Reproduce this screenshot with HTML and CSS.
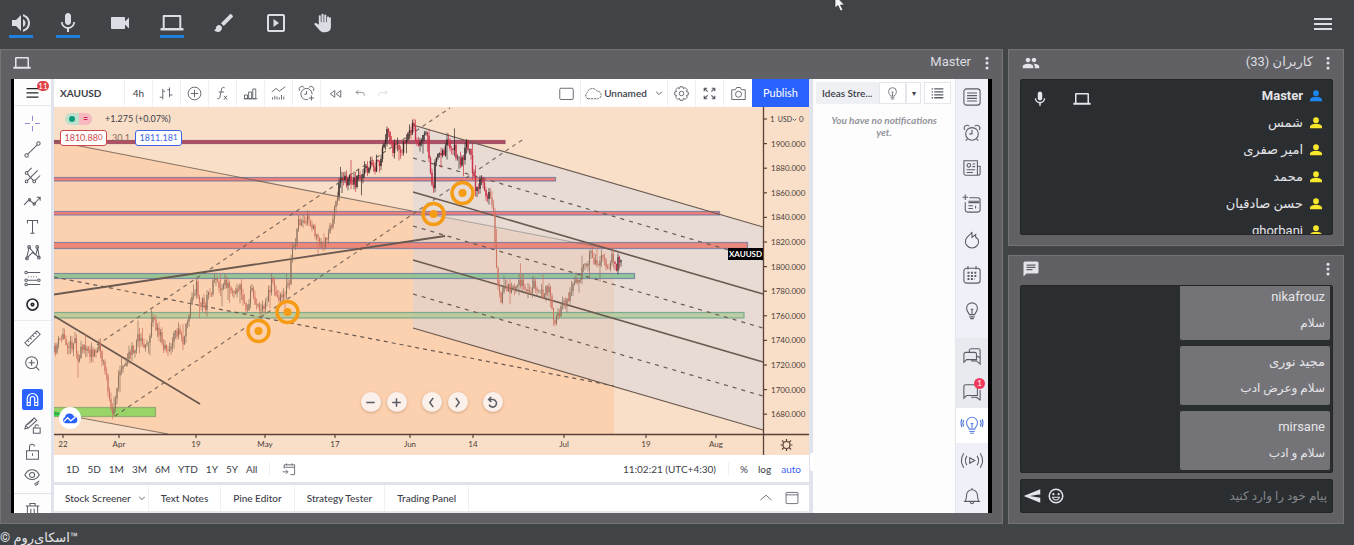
FILE: index.html
```html
<!DOCTYPE html>
<html lang="fa">
<head>
<meta charset="utf-8">
<title>Skyroom</title>
<link rel="stylesheet" href="styles.css">
</head>
<body>
<svg class="defs" aria-hidden="true">
  <symbol id="laptop" viewBox="0 0 24 24"><path d="M4 4h16c.8 0 1.300.5 1.300 1.200V17H23.500v2.500H.5V17h2.200V5.200C2.700 4.500 3.200 4 4 4zm.7 2v11h14.600V6z" fill-rule="evenodd"/></symbol>
  <symbol id="mic" viewBox="0 0 24 24"><path d="M12 14c1.660 0 3-1.340 3-3V5c0-1.660-1.340-3-3-3S9 3.340 9 5v6c0 1.660 1.340 3 3 3zm5.300-3c0 3-2.540 5.100-5.300 5.100S6.700 14 6.700 11H5c0 3.410 2.720 6.230 6 6.720V21h2v-3.280c3.280-.48 6-3.300 6-6.720z"/></symbol>
  <symbol id="dots" viewBox="0 0 24 24"><circle cx="12" cy="5.500" r="2"/><circle cx="12" cy="12" r="2"/><circle cx="12" cy="18.500" r="2"/></symbol>
  <symbol id="person" viewBox="0 0 16 16"><circle cx="8" cy="4.200" r="3.800"/><path d="M0 15v-2c0-2.600 4.500-4 8-4s8 1.400 8 4v2z"/></symbol>
  <symbol id="bulb" viewBox="0 0 20 20"><path d="M7 14c0-2-3-3-3-7a6 6 0 0 1 12 0c0 4-3 5-3 7zM7 16.500h6M8 18.500h4M10 14V8M8.500 8h3"/></symbol>
  <symbol id="alarm" viewBox="0 0 20 20"><circle cx="10" cy="11" r="7"/><path d="M10 6.500V11H7M2 6.500A3.200 3.200 0 0 1 7 2.500M18 6.500A3.200 3.200 0 0 0 13 2.500M5 16.500l-2 2M15 16.500l2 2"/></symbol>
  <symbol id="chev" viewBox="0 0 10 10"><path d="M1.500 3.500L5 7l3.500-3.500"/></symbol>
</svg>

<header class="topbar">
  <button class="tool on" aria-label="Speaker"><svg viewBox="0 0 24 24"><path d="M3 9v6h4l5 5V4L7 9H3zm13.500 3A4.500 4.500 0 0 0 14 7.970v8.050c1.480-.73 2.500-2.250 2.500-4.020zM14 3.230v2.060c2.890.86 5 3.540 5 6.710s-2.110 5.850-5 6.710v2.060c4.010-.91 7-4.490 7-8.770s-2.990-7.860-7-8.770z"/></svg></button>
  <button class="tool on" aria-label="Microphone"><svg><use href="#mic"/></svg></button>
  <button class="tool" aria-label="Camera"><svg viewBox="0 0 24 24"><path d="M17 10.500V7c0-.550-.45-1-1-1H4c-.55 0-1 .45-1 1v10c0 .550.45 1 1 1h12c.55 0 1-.45 1-1v-3.500l4 4v-11l-4 4z"/></svg></button>
  <button class="tool on" aria-label="Screen sharing"><svg><use href="#laptop"/></svg></button>
  <button class="tool" aria-label="Whiteboard"><svg viewBox="0 0 24 24"><path d="M7 14c-1.660 0-3 1.340-3 3 0 1.310-1.160 2-2 2 .92 1.220 2.490 2 4 2 2.210 0 4-1.790 4-4 0-1.660-1.340-3-3-3zm13.710-9.370l-1.340-1.340a1 1 0 0 0-1.410 0L9 12.250 11.750 15l8.960-8.960a1 1 0 0 0 0-1.410z"/></svg></button>
  <button class="tool" aria-label="Media"><svg viewBox="0 0 24 24"><path d="M9.500 8v8l5.500-4zM19 3H5a2 2 0 0 0-2 2v14a2 2 0 0 0 2 2h14a2 2 0 0 0 2-2V5a2 2 0 0 0-2-2zm0 16H5V5h14z"/></svg></button>
  <button class="tool hand" aria-label="Raise hand"><svg viewBox="0 0 24 24"><path d="M21.500 5.500v11c0 4-2.500 6.500-6.500 6.500h-2c-2 0-3.500-.7-4.800-2.100L1.300 13.100c.8-1 2-1.300 3.200-.6L7 14V4c0-1.700 2.300-1.700 2.300 0v7h.9V2.300c0-1.700 2.400-1.700 2.400 0V11h.9V3c0-1.700 2.400-1.700 2.400 0v8h.9V5.500c0-1.700 2.400-1.700 2.400 0z"/></svg></button>
  <span class="grow"></span>
  <button class="tool" aria-label="Menu"><svg viewBox="0 0 24 24"><path d="M3 7h18v2H3zm0 5h18v2H3zm0 5h18v2H3z"/></svg></button>
</header>

<main class="room">
  <section class="panel share">
    <header class="panel-head">
      <svg class="ic18"><use href="#laptop"/></svg>
      <span class="grow"></span>
      <h2>Master</h2>
      <button class="dots" aria-label="Options"><svg><use href="#dots"/></svg></button>
    </header>
    <div class="screen">
      <nav class="draw-tools">
        <button class="menu" aria-label="Main menu"><svg viewBox="0 0 20 20" class="thick"><path d="M3 5.500h14M3 10.500h14M3 15.500h14"/></svg><b class="badge">11</b></button>
        <div class="group first">
          <button aria-label="Cross"><svg viewBox="0 0 20 20" class="violet"><path d="M10 1v6M10 13v6M1 10h6M13 10h6"/></svg></button>
          <button aria-label="Trend line"><svg viewBox="0 0 20 20"><circle cx="3" cy="17" r="2"/><circle cx="17" cy="3" r="2"/><path d="M4.500 15.500L15.500 4.500"/></svg></button>
          <button aria-label="Pitchfork"><svg viewBox="0 0 20 20"><circle cx="3" cy="7" r="1.600"/><circle cx="3" cy="17" r="1.600"/><circle cx="12" cy="17" r="1.600"/><path d="M4 6l5-5M4 16L16 4M13 16l6-6M4 8l7 8"/></svg></button>
          <button aria-label="Pattern"><svg viewBox="0 0 20 20"><path d="M0 14l6-6 6 5 7-8M15 5h4v4"/><circle cx="6.500" cy="8" r="1.400"/><circle cx="12" cy="13" r="1.400"/></svg></button>
          <button aria-label="Text"><svg viewBox="0 0 20 20"><path d="M4 6.500V3h12v3.500M10 3v15M7.500 18h5"/></svg></button>
          <button aria-label="XABCD"><svg viewBox="0 0 20 20"><path d="M3 17l3-13 8 9 2-9 2 12-8-6z"/><circle cx="3.500" cy="17" r="1.600"/><circle cx="6" cy="3.500" r="1.600"/><circle cx="15.500" cy="3.500" r="1.600"/><circle cx="17.500" cy="16" r="1.600"/></svg></button>
          <button aria-label="Position"><svg viewBox="0 0 20 20"><path d="M4 3h15M4 12h12M4 17h15"/><path d="M5 8h12" stroke-dasharray="1 2"/><circle cx="2.500" cy="3" r="1.500"/><circle cx="2.500" cy="12" r="1.500"/><circle cx="2.500" cy="17" r="1.500"/><circle cx="17.500" cy="12" r="1.500"/></svg></button>
          <button aria-label="Icons"><svg viewBox="0 0 20 20" class="heavy"><circle cx="10" cy="10" r="6.500"/><circle cx="10" cy="10" r="1.500"/></svg></button>
        </div>
        <div class="group second">
          <button aria-label="Measure"><svg viewBox="0 0 20 20"><path d="M1 15L15 1 19 5 5 19zM4 12l2 2M7 9l2 2M10 6l2 2M13 3l2 2"/></svg></button>
          <button aria-label="Zoom in"><svg viewBox="0 0 20 20"><circle cx="9" cy="9" r="7"/><path d="M14 14l4 4M5.500 9h7M9 5.500v7"/></svg></button>
        </div>
        <div class="group">
          <button aria-label="Magnet"><svg viewBox="0 0 20 20" class="magnet"><path d="M3 18V9a7 7 0 0 1 14 0v9h-4V9a3 3 0 0 0-6 0v9zM3 14h4M13 14h4"/></svg></button>
          <button aria-label="Keep drawing"><svg viewBox="0 0 20 20"><path d="M1 14l1-4 10-9 3 3L5 13zM2 10l3 3M4 9l7-6M11 13h8v6h-8zM13 13v-2a2 2 0 0 1 4 0"/></svg></button>
          <button aria-label="Lock drawings"><svg viewBox="0 0 20 20"><path d="M3 9h14v10H3zM6.500 9V5a3 3 0 0 1 6-1M10 12v3"/></svg></button>
          <button aria-label="Hide drawings"><svg viewBox="0 0 20 20"><path d="M1 7c4-8 13-8 17 0-4 7-13 7-17 0zM12 18l6-4M13 19c1 0 3 0 4-3"/><circle cx="9.500" cy="7" r="3"/></svg></button>
        </div>
        <button class="trash" aria-label="Remove"><svg viewBox="0 0 20 20"><path d="M2 6h16M7 6V3h6v3M4 6v12h12V6M8 9v7M12 9v7"/></svg></button>
      </nav>

      <div class="chart-col">
        <div class="chart-bar">
          <button class="symbol">XAUUSD</button>
          <button class="cell">4h</button>
          <button class="cell" aria-label="Bars"><svg viewBox="0 0 20 20"><path d="M5 4v14M1 15h4M5 7h3M14 2v13M11 5h3M14 12h4"/></svg></button>
          <button class="cell" aria-label="Compare"><svg viewBox="0 0 20 20"><circle cx="10" cy="10" r="8.500"/><path d="M5 10h10M10 5v10"/></svg></button>
          <button class="cell" aria-label="Indicators"><svg viewBox="0 0 20 20"><path d="M13 2.500c-3-1.500-4 0-4.500 3L6.500 15c-.5 2-1.500 2.500-3.500 1.500M5 8h7M12 13l4 5M16 13l-4 5"/></svg></button>
          <button class="cell" aria-label="Financials"><svg viewBox="0 0 20 20"><path d="M2 17v-5h4v5zM7.500 17V8h4v9zM13 17V4h4v13zM1 17h18"/></svg></button>
          <button class="cell" aria-label="Templates"><svg viewBox="0 0 20 20"><path d="M1 8l6-5 4 4 8-6M2 18v-3M5 18v-5M8 18v-4M11 18v-3M14 18v-6M17 18v-4"/></svg></button>
          <button class="cell" aria-label="Alert"><svg viewBox="0 0 20 20"><path d="M12 18A7.500 7.500 0 1 1 17.500 11M10 6.500V11H7M1 6.500A3.500 3.500 0 0 1 7 2M19 6.500A3.500 3.500 0 0 0 13 2M13 16h7M16.500 12.500v7"/></svg></button>
          <button class="cell plain" aria-label="Replay"><svg viewBox="0 0 20 20"><path d="M9 6v9l-6-4.500zM17 6v9l-6-4.500z"/></svg></button>
          <button class="cell undo" aria-label="Undo"><svg viewBox="0 0 20 20"><path d="M6 4L2 8l4 4M2 8h10c4 0 5 2 5 6"/></svg></button>
          <button class="cell undo faint" aria-label="Redo"><svg viewBox="0 0 20 20"><path d="M14 4l4 4-4 4M18 8H8c-4 0-5 2-5 6"/></svg></button>
          <span class="grow"></span>
          <button class="cell" aria-label="Layout"><svg viewBox="0 0 20 20"><rect x="1" y="3" width="18" height="15" rx="1.500"/></svg></button>
          <button class="cell cloud"><svg viewBox="0 0 20 20"><path d="M4 17a4.500 4.500 0 0 1-1-8 7 7 0 0 1 13-2 5 5 0 0 1 1 10z" stroke-dasharray="3 1"/></svg>Unnamed<svg class="chev"><use href="#chev"/></svg></button>
          <button class="cell" aria-label="Settings"><svg viewBox="0 0 20 20"><path d="M8 1h4l.7 2.500 2.300-1.300 2.800 2.800-1.300 2.300L19 8v4l-2.500.7 1.300 2.300-2.800 2.800-2.300-1.300L12 19H8l-.7-2.500L5 17.800 2.200 15l1.300-2.300L1 12V8l2.500-.7L2.200 5 5 2.200l2.300 1.300z"/><circle cx="10" cy="10" r="3"/></svg></button>
          <button class="cell" aria-label="Full screen"><svg viewBox="0 0 20 20"><path d="M3 7V3h4M3 3l4.500 4.500M13 3h4v4M17 3l-4.500 4.500M3 13v4h4M3 17l4.500-4.500M17 13v4h-4M17 17l-4.500-4.500" stroke-width="1.600"/></svg></button>
          <button class="cell plain" aria-label="Snapshot"><svg viewBox="0 0 20 20"><path d="M1 5h5l1.500-3h5L14 5h5v13H1z"/><circle cx="10" cy="11" r="4"/></svg></button>
          <button class="publish">Publish</button>
        </div>

        <div class="chart">
          <svg class="plot" viewBox="54 107 755 348" preserveAspectRatio="xMidYMid slice">
            <rect x="54" y="107" width="755" height="348" fill="#f9dfc8"/>
            <path d="M54 140L614 252V434H168L54 413z" fill="#fcd1b0"/>
            <path d="M413 125L763 227V430L413 328z" fill="#c4d2ea" fill-opacity=".34"/>
            <g stroke="#5f6fa0" stroke-opacity=".7">
              <rect x="50" y="140.500" width="455" height="3" fill="#b85064" stroke="#8a3a58"/>
              <rect x="50" y="177.500" width="505.500" height="3.500" fill="#f08078"/>
              <rect x="50" y="211.500" width="669.500" height="3.500" fill="#f08078"/>
              <rect x="50" y="242.500" width="697.500" height="6" fill="#ec7a6c" fill-opacity=".85"/>
              <rect x="50" y="273.500" width="584.500" height="5" fill="#7ec08c" fill-opacity=".8"/>
              <rect x="50" y="312.500" width="694" height="5.500" fill="#a8c890" fill-opacity=".7" stroke="#5a9a80"/>
              <rect x="50" y="407.500" width="105.500" height="9" fill="#98d468" stroke="#7aa060"/>
            </g>
            <path d="M54 411l8 2v3h-8z" fill="#2fd64a"/>
            <g fill="none" stroke="#6a5a50">
              <path d="M54 141L412 211M54 413l114 21" stroke-opacity=".8"/>
              <path d="M412 211l202 39" stroke-opacity=".4"/>
              <path d="M54 294.500L445 236M54 316l146 88" stroke-width="1.800"/>
              <path d="M413 125l350 102M413 328l350 102" stroke-width="1.200"/>
              <path d="M413 192l350 102M413 260l350 102" stroke-width="1.600"/>
              <path d="M413 158l350 102M413 226l350 102M413 294l350 102" stroke-width="1.200" stroke-dasharray="4 5"/>
              <path d="M54 277l560 109" stroke-width="1.200" stroke-dasharray="4 4"/>
              <path d="M97 345L450 108M115 416L525 138" stroke-dasharray="4 4" stroke-opacity=".85"/>
            </g>
            <g id="candles"></g>
            <g id="targets" fill="none" stroke="#f59b14" stroke-width="3.500"></g>
            <path d="M763.500 107V455M54 434.500H809" stroke="#5a4238" stroke-width="1.300"/>
            <g id="axis" class="axis"></g>
            <rect x="728" y="248" width="35" height="12" fill="#000"/>
            <text x="745.500" y="257" class="tag">XAUUSD</text>
            <g fill="none" stroke="#5a4238"><circle cx="786.500" cy="445" r="3.500"/><path d="M786.500 439v2M786.500 449v2M780.500 445h2M790.500 445h2M782 440.500l1.500 1.500M789.500 448l1.500 1.500M782 449.500l1.500-1.500M789.500 442l1.500-1.500"/></g>
          </svg>
          <div class="legend"><span class="pill"><i></i><b>≈</b></span>+1.275 (+0.07%)</div>
          <div class="quotes"><button class="sell">1810.88<sup>0</sup></button><span>30.1</span><button class="buy">1811.18<sup>1</sup></button></div>
          <button class="usd">USD<svg><use href="#chev"/></svg></button>
          <div class="brand"><svg viewBox="0 0 20 14"><path d="M4 13a4 4 0 0 1-.5-7.500A6 6 0 0 1 15 4.500 4.300 4.300 0 0 1 16 13z" fill="#2962ff"/><path d="M2 11l5-5 4 4 6-5" fill="none" stroke="#fff" stroke-width="1.600"/></svg></div>
          <div class="nav">
            <button aria-label="Zoom out"><svg viewBox="0 0 20 20"><path d="M5 10h10"/></svg></button>
            <button aria-label="Zoom in"><svg viewBox="0 0 20 20"><path d="M5 10h10M10 5v10"/></svg></button>
            <button class="apart" aria-label="Scroll left"><svg viewBox="0 0 20 20"><path d="M12 4.500L8 10l4 5.500"/></svg></button>
            <button aria-label="Scroll right"><svg viewBox="0 0 20 20"><path d="M8 4.500L12 10l-4 5.500"/></svg></button>
            <button class="apart" aria-label="Reset"><svg viewBox="0 0 20 20"><path d="M5.500 6.500H11a4.500 4.500 0 1 1-5 6M8.500 3.500l-3 3 3 3"/></svg></button>
          </div>
        </div>

        <div class="ranges">
          <button>1D</button><button>5D</button><button>1M</button><button>3M</button><button>6M</button><button>YTD</button><button>1Y</button><button>5Y</button><button>All</button>
          <button class="goto" aria-label="Go to"><svg viewBox="0 0 20 20"><path d="M3 9V4h15v14h-6M3 7.500h15M6.500 2v3M14.500 2v3M1 14h7M5.500 11l3 3-3 3"/></svg></button>
          <span class="grow"></span>
          <time>11:02:21 (UTC+4:30)</time>
          <button>%</button><button>log</button><button class="active">auto</button>
        </div>
        <div class="tabs">
          <button>Stock Screener <svg><use href="#chev"/></svg></button><button>Text Notes</button><button>Pine Editor</button><button>Strategy Tester</button><button>Trading Panel</button>
          <span class="grow"></span>
          <button class="ctl" aria-label="Open panel"><svg viewBox="0 0 20 20"><path d="M2 13l8-7 8 7"/></svg></button>
          <button class="ctl" aria-label="Maximize panel"><svg viewBox="0 0 20 20"><rect x="1.500" y="2" width="17" height="16" rx="1"/><path d="M1.500 5.500h17"/></svg></button>
        </div>
      </div>

      <aside class="ideas">
        <div class="ideas-head">
          <span class="title">Ideas Stre...</span>
          <button class="light" aria-label="Ideas"><svg><use href="#bulb"/></svg></button><button class="drop" aria-label="More">▾</button>
          <button class="list" aria-label="List"><svg viewBox="0 0 20 20"><path d="M1 3h2M5 3h14M1 7.500h2M5 7.500h14M1 12h2M5 12h14M1 16.500h2M5 16.500h14" stroke-width="2"/></svg></button>
        </div>
        <p>You have no notifications yet.</p>
        <span class="handle"></span>
      </aside>

      <nav class="widgets">
        <div class="upper">
          <button aria-label="Watchlist"><svg viewBox="0 0 20 20"><rect x="1" y="1" width="18" height="18" rx="3"/><path d="M4.500 5.500h11M4.500 8.500h11M4.500 11.500h11M4.500 14.500h11"/></svg></button>
          <button aria-label="Alerts"><svg><use href="#alarm"/></svg></button>
          <button aria-label="News"><svg viewBox="0 0 20 20"><path d="M1 2h15v16H3a2 2 0 0 1-2-2zM16 8h3v8.500a1.500 1.500 0 0 1-3 0M10.500 5.500h3M10.500 8.500h3M4 12h9.500M4 15h7"/><circle cx="6.500" cy="7" r="2"/></svg></button>
          <button aria-label="Data window"><svg viewBox="0 0 20 20"><path d="M7 3h9.500A2.500 2.500 0 0 1 19 5.500v11a2.500 2.500 0 0 1-2.500 2.500H5a2.500 2.500 0 0 1-2.500-2.500V8M2.500-.5v6M-.5 2.500h6M6 7h12M6 8.500h12M6 12h5M6 15h5M14 12v3"/></svg></button>
          <button aria-label="Hotlists"><svg viewBox="0 0 20 20"><path d="M10 1v6l4-3c-1 3 1 4 3 5.500a7.300 7.300 0 1 1-14 0C5 5 8 5 10 1z"/></svg></button>
          <button aria-label="Calendar"><svg viewBox="0 0 20 20"><rect x="1" y="2.500" width="18" height="16.500" rx="3"/><path d="M5.500 0v4M14.500 0v4"/><path d="M5 7.500h11M5 11h11M5 14.500h8" stroke-width="2.200" stroke-dasharray="2.200 1.600"/></svg></button>
          <button aria-label="My ideas"><svg><use href="#bulb"/></svg></button>
        </div>
        <div class="lower">
          <button class="shade" aria-label="Public chats"><svg viewBox="0 0 20 20"><path d="M7 5.500V4a2 2 0 0 1 2-2h8a2 2 0 0 1 2 2v8l-4-2M1 17V8a2 2 0 0 1 2-2h10a2 2 0 0 1 2 2v6H4zM9 15.500h6l4 3.500v-7"/></svg></button>
          <button class="shade" aria-label="Private chats"><svg viewBox="0 0 20 20"><path d="M1 18V5a2 2 0 0 1 2-2h11a2 2 0 0 1 2 2v10H4zM9 17h6l4 3V9"/></svg><b class="badge pink">1</b></button>
          <button class="sel" aria-label="Ideas stream"><svg viewBox="0 0 24 20"><path d="M9 14c0-2-3-3-3-7a6 6 0 0 1 12 0c0 4-3 5-3 7zM9 16.500h6M10 18.500h4M12 13V8M10.500 8h3M3 4Q1 7.500 3 11M1 3q-2 4.500 0 9M21 4q2 3.500 0 7M23 3q2 4.500 0 9"/></svg></button>
          <button class="wide" aria-label="Streams"><svg viewBox="0 0 24 20"><path d="M9.500 7v6l5.500-3zM6.500 5Q3 10 6.500 15M3 2q-5 8 0 16M17.500 5q3.500 5 0 10M21 2q5 8 0 16"/></svg></button>
          <button aria-label="Notifications"><svg viewBox="0 0 20 20"><path d="M2 16c2-2 2-4 2-7a6 6 0 0 1 12 0c0 3 0 5 2 7zM8 16.500a2 2 0 0 0 4 0M10 1v2"/></svg></button>
        </div>
      </nav>
    </div>
  </section>

  <div class="side">
    <section class="panel users" dir="rtl">
      <header class="panel-head">
        <button class="dots" aria-label="گزینه‌ها"><svg><use href="#dots"/></svg></button>
        <h2>کاربران (33)</h2>
        <span class="grow"></span>
        <svg class="ic18" viewBox="0 0 24 24"><path d="M16 11c1.660 0 3-1.340 3-3s-1.340-3-3-3-3 1.340-3 3 1.340 3 3 3zm-8 0c1.660 0 3-1.340 3-3S9.660 5 8 5 5 6.340 5 8s1.340 3 3 3zm0 2c-2.330 0-7 1.170-7 3.500V19h14v-2.500c0-2.330-4.670-3.500-7-3.500zm8 0c-.29 0-.62.020-.97.050 1.160.84 1.970 1.970 1.970 3.450V19h6v-2.500c0-2.330-4.670-3.500-7-3.500z"/></svg>
      </header>
      <ul class="user-list">
        <li class="owner"><svg class="who"><use href="#person"/></svg><span>Master</span><i class="grow"></i><svg class="ic18"><use href="#laptop"/></svg><svg class="ic18"><use href="#mic"/></svg></li>
        <li><svg class="who"><use href="#person"/></svg><span>شمس</span></li>
        <li><svg class="who"><use href="#person"/></svg><span>امیر صفری</span></li>
        <li><svg class="who"><use href="#person"/></svg><span>محمد</span></li>
        <li><svg class="who"><use href="#person"/></svg><span>حسن صادقیان</span></li>
        <li><svg class="who"><use href="#person"/></svg><span>ghorbani</span></li>
      </ul>
    </section>

    <section class="panel chat" dir="rtl">
      <header class="panel-head">
        <button class="dots" aria-label="گزینه‌ها"><svg><use href="#dots"/></svg></button>
        <span class="grow"></span>
        <svg class="ic18" viewBox="0 0 24 24"><path d="M20 2H4a2 2 0 0 0-2 2v18l4-4h14a2 2 0 0 0 2-2V4a2 2 0 0 0-2-2zM6 6h12v1.500H6zm0 3h12v1.500H6zm0 3h8v1.500H6z" fill-rule="evenodd"/></svg>
      </header>
      <div class="messages">
        <article><h3>nikafrouz</h3><p>سلام</p></article>
        <article><h3>مجید نوری</h3><p>سلام وعرض ادب</p></article>
        <article><h3>mirsane</h3><p>سلام و ادب</p></article>
      </div>
      <form class="compose">
        <input type="text" aria-label="پیام" placeholder="پیام خود را وارد کنید">
        <button type="button" aria-label="شکلک"><svg viewBox="0 0 24 24"><path d="M12 2a10 10 0 1 0 0 20 10 10 0 0 0 0-20zm0 18a8 8 0 1 1 0-16 8 8 0 0 1 0 16zM6.500 13h11c-.5 3-2.600 5-5.500 5s-5-2-5.500-5zm1.800 1.300c.7 1.500 2 2.300 3.700 2.300s3-.8 3.700-2.300z" fill-rule="evenodd"/><circle cx="8.500" cy="9.500" r="1.500"/><circle cx="15.500" cy="9.500" r="1.500"/></svg></button>
        <button type="button" aria-label="ارسال"><svg viewBox="0 0 24 24"><path d="M23 3v18L1 12zM23 9.800L9 12l14 2.200z" fill-rule="evenodd"/></svg></button>
      </form>
    </section>
  </div>
</main>

<footer class="credit">© اسکای‌روم™</footer>
<svg class="pointer" viewBox="0 0 12 16" aria-hidden="true"><path d="M1-3v13l3-2.500 2.500 5.500 2.500-1-2.500-5h4z" fill="#f4f4f4" stroke="#222" stroke-width=".6"/></svg>
<script src="chart.js"></script>
</body>
</html>
```

FILE: styles.css
```css
* { box-sizing: border-box; }
body {
  margin: 0;
  height: 100vh;
  display: flex;
  flex-direction: column;
  overflow: hidden;
  background: #414447;
  color: #e4e4e8;
  font: 13px/20px Roboto, "DejaVu Sans", sans-serif;
}
button { border: 0; padding: 0; background: none; color: inherit; font: inherit; display: flex; align-items: center; justify-content: center; position: relative; }
h2, h3, p, ul { margin: 0; padding: 0; font-size: inherit; font-weight: 400; }
svg { display: block; flex: none; }
.defs { position: absolute; width: 0; height: 0; }
.grow { flex: 1; }

/* top bar */
.topbar { display: flex; height: 49px; padding: 11px 19px 0 9px; gap: 28px; flex: none; }
.tool { width: 24px; height: 27px; align-items: flex-start; }
.tool:first-child { margin-right: -5px; }
.tool svg { width: 24px; height: 24px; fill: #dcdce4; }
.hand { margin-left: -5px; }
.hand svg { width: 20px; }
.tool.on { border-bottom: 3px solid #1e80dc; }

/* panels */
.room { flex: 1; min-height: 0; display: flex; gap: 5px; padding-right: 10px; }
.panel { background: #616165; border: 1px solid #727478; padding: 0 10px 10px; display: flex; flex-direction: column; min-height: 0; }
.share { flex: 1; min-width: 0; }
.side { width: 336px; display: flex; flex-direction: column; gap: 9px; }
.panel-head { display: flex; align-items: center; height: 29px; flex: none; padding-bottom: 4px; }
.panel-head h2 { line-height: 20px; padding-bottom: 2px; color: #dcdce0; }
.ic18 { width: 18px; height: 18px; fill: #e4e4ea; margin: 0 2px; }
.dots { width: 10px; height: 18px; }
.dots svg { width: 18px; height: 18px; fill: #e4e4ea; }
.share h2 { margin-right: 11px; }

.screen {
  flex: 1; min-height: 0; display: flex; overflow: hidden;
  background: #e0e3eb; border: solid #000; border-width: 0 4px 0 3px;
  color: #3c4048; font: 11px/14px Lato, sans-serif;
}
.screen svg { width: 17px; height: 17px; fill: none; stroke: #5a5d66; stroke-width: 1.200; overflow: visible; }

/* drawing toolbar */
.draw-tools { width: 37px; margin-right: 3px; background: #fdfdfe; display: flex; flex-direction: column; }
.draw-tools .menu { height: 27px; border-bottom: 1px solid #e8eaf0; }
.draw-tools .thick { stroke: #222; stroke-width: 1.600; }
.draw-tools .violet { stroke: #9a8ad8; }
.draw-tools .heavy { stroke: #2a2c33; stroke-width: 2; }
.group { display: flex; flex-direction: column; }
.group button { height: 26px; }
.group.first { flex: 1; padding: 5px 0 3px; border-bottom: 1px solid #e8eaf0; }
.group.first button { flex: 1; height: auto; }
.group.second { padding: 5px 0 10px; }
.group.second button { height: 25px; }
.screen .magnet { width: 21px; height: 21px; padding: 3px; background: #2962ff; stroke: #fff; stroke-width: 1.600; border-radius: 2px; }
.trash { border-top: 1px solid #e0e3eb; height: 20px; padding-top: 12px; margin-top: 3px; }
.badge { position: absolute; top: 2px; right: 2px; min-width: 12px; height: 10px; border-radius: 5px; background: #e0424a; color: #fff; font: 8px/10px Lato, sans-serif; text-align: center; }
.badge.pink { width: 11px; min-width: 0; height: 11px; line-height: 11px; border-radius: 6px; right: 3px; top: 5px; background: #f23a5c; }

/* chart column */
.chart-col { flex: 1; min-width: 0; display: flex; flex-direction: column; }
.chart-bar { display: flex; height: 28px; background: #fff; flex: none; }
.symbol { width: 71px; justify-content: flex-start; padding-left: 6px; font-weight: 700; font-size: 10px; border-right: 1px solid #eef0f4; }
.cell { width: 28px; border-right: 1px solid #eef0f4; font-size: 10px; }
.screen .chart-bar svg { width: 15px; height: 15px; }
.cell.plain { border-right: 0; }
.cell.undo { width: 22px; border: 0; }
.screen .undo svg { width: 11px; height: 11px; }
.faint { opacity: .3; }
.cell.cloud { width: 87px; gap: 4px; font-weight: 600; }
.screen .cloud .chev { width: 8px; height: 8px; margin-left: 4px; }
.publish { width: 57px; background: #2962ff; color: #fff; }

.chart { flex: 1; min-height: 0; position: relative; background: #f9dfc8; }
.screen .plot { width: 100%; height: 100%; stroke: none; overflow: hidden; }
.axis { font: 8px Lato, sans-serif; fill: #4c403a; stroke: none; }
.axis .mid { text-anchor: middle; }
.tag { font: 700 8px Lato, sans-serif; fill: #fff; text-anchor: middle; }
.legend { position: absolute; left: 11px; top: 5px; display: flex; align-items: center; gap: 13px; font-size: 9px; }
.pill { display: flex; width: 27px; height: 12px; border-radius: 6px; overflow: hidden; background: #bfe0cc; }
.pill i { width: 6px; height: 6px; margin: 3px 4px; border-radius: 3px; background: #0a9a7c; }
.pill b { flex: 1; background: #f8b8c0; color: #d02858; line-height: 11px; text-align: center; }
.quotes { position: absolute; left: 6px; top: 23px; display: flex; align-items: center; font-size: 9px; }
.quotes button { width: 47px; height: 16px; border: 1px solid; border-radius: 3px; background: #fff; line-height: 12px; }
.quotes span { width: 28px; text-align: center; color: #8a6860; }
.quotes sup { font-size: 8px; line-height: 8px; padding-bottom: 3px; }
.sell { color: #d0484c; }
.buy { color: #4064e4; }
.usd { position: absolute; right: 11px; top: 6px; width: 21px; height: 12px; font-size: 7px; }
.screen .usd svg { width: 5px; height: 5px; stroke-width: 2; }
.brand { position: absolute; left: 5px; bottom: 26px; width: 22px; height: 22px; border-radius: 11px; background: #fff; display: flex; align-items: center; justify-content: center; }
.screen .brand svg { width: 16px; height: 11px; stroke: none; }
.nav { position: absolute; left: 50%; bottom: 43px; transform: translateX(-50%); display: flex; gap: 6px; }
.nav button { width: 20px; height: 20px; border-radius: 10px; background: #fbf1ea; box-shadow: 0 1px 3px rgba(120, 80, 50, .35); }
.nav .apart { margin-left: 9px; }
.nav svg { stroke-width: 1.800; }

.ranges { display: flex; align-items: center; height: 27px; flex: none; padding: 0 8px 0 7px; background: #fff; font-size: 10px; }
.ranges button { padding: 0 4px; }
.ranges button:first-child { padding-left: 5px; }
.ranges .goto { margin-left: 8px; padding-left: 12px; border-left: 1px solid #eef0f4; }
.screen .ranges svg { width: 14px; height: 14px; }
.ranges time { padding-right: 12px; margin-right: 6px; border-right: 1px solid #eef0f4; }
.ranges time ~ button { padding: 0 5px; }
.ranges time ~ .active { color: #3c5cf0; padding-right: 0; }
.tabs { display: flex; height: 28px; flex: none; margin-top: 3px; background: #fff; font-size: 10px; font-weight: 500; border-bottom: 2px solid #e8eaf0; padding-right: 4px; }
.tabs button { padding: 0 12px; border-right: 1px solid #eef0f4; gap: 8px; }
.tabs button:first-child { padding: 0 2px 0 11px; gap: 7px; }
.screen .tabs svg { width: 8px; height: 8px; }
.tabs .ctl { padding: 0 6px; border: 0; }
.screen .tabs .ctl svg { width: 14px; height: 14px; }

/* ideas stream */
.ideas { width: 142px; margin-left: 4px; background: #fdfdfe; position: relative; }
.ideas-head { display: flex; height: 27px; padding: 3px 4px 2px 3px; font-size: 10px; }
.ideas-head .title { flex: 1; background: #eef0f4; padding: 4px 0 0 6px; font-weight: 600; white-space: nowrap; }
.ideas-head button { border: 1px solid #e4e6ec; background: #fff; }
.light { width: 27px; }
.ideas-head .drop { width: 15px; font-size: 8px; margin-right: 3px; }
.list { width: 27px; }
.screen .ideas-head svg { width: 13px; height: 13px; }
.ideas p { padding: 8px 10px; font-size: 10px; line-height: 12px; font-weight: 700; font-style: italic; text-align: center; color: #94969c; }
.handle { position: absolute; left: -3px; bottom: 42px; width: 5px; height: 18px; border-radius: 2px; background: #fff; }
.widgets { width: 33px; display: flex; flex-direction: column; background: #f0f1f8; border-left: 1px solid #e4e6ee; }
.widgets svg { width: 18px; height: 18px; }
.widgets .upper { flex: 1; display: flex; flex-direction: column; padding-bottom: 9px; }
.widgets .upper button { flex: 1; }
.lower { display: flex; flex-direction: column; }
.lower button { height: 35px; }
.shade { background: #e9eaf0; }
.lower .sel { background: #fff; }
.screen .sel svg { stroke: #5f80e0; width: 22px; height: 19px; }
.screen .wide svg { width: 22px; height: 19px; }

/* users */
.users { height: 197px; flex: none; padding-left: 11px; padding-right: 10px; }
.side .dots { margin-left: 10px; }
.user-list { list-style: none; flex: 1; min-height: 0; overflow: hidden; background: #2b2e31; border: 1px solid #232527; padding: 2px 10px; border-radius: 2px; }
.user-list li { height: 27px; display: flex; align-items: center; gap: 7px; }
.who { width: 12px; height: 12px; fill: #f8e82c; }
.owner { font-weight: 700; }
.owner .who { fill: #1e86f0; }
.owner .ic18 { margin: 7px 0 0 17px; }
.owner .ic18:last-child { margin-left: 0; }
.user-list .owner { padding-left: 0; }

/* chat */
.chat { flex: 1; padding-left: 11px; }
.messages { flex: 1; min-height: 0; overflow: hidden; display: flex; flex-direction: column; justify-content: flex-end; gap: 6px; padding: 0 2px 2px; background: #2b2e31; border: 1px solid #232527; border-radius: 2px; }
.messages article { width: 150px; height: 59px; flex: none; padding: 2px 5px; background: #747478; border-radius: 2px; line-height: 27px; }
.messages p { font-size: 12px; }
.compose { display: flex; align-items: center; height: 34px; flex: none; margin-top: 6px; padding: 0 5px 0 2px; gap: 6px; background: #2b2e31; border: 1px solid #232527; border-radius: 2px; }
.compose input { flex: 1; min-width: 0; padding: 0; border: 0; outline: 0; background: none; color: inherit; font: inherit; font-size: 12px; }
.compose input::placeholder { color: #85878b; opacity: 1; }
.compose button svg { width: 18px; height: 18px; fill: #e4e4ea; }
.credit { height: 21px; flex: none; padding-top: 4px; line-height: 20px; }
.pointer { position: absolute; left: 834px; top: -2px; width: 12px; height: 16px; }
```

FILE: chart.js
```js
(function () {
  var NS = 'http://www.w3.org/2000/svg';
  function add(parent, name, attrs, text) {
    var el = document.createElementNS(NS, name);
    for (var k in attrs) el.setAttribute(k, attrs[k]);
    if (text) el.textContent = text;
    parent.appendChild(el);
  }

  // Price path: x, y pairs
  var path = [54,352, 57,345, 63,336, 70,346, 75,340, 78,357, 85,345, 92,354, 98,345, 103,362, 107,382, 110,408, 114,411,
    117,385, 121,375, 125,358, 130,355, 135,347, 140,334, 145,345, 148,342, 152,320, 158,330, 163,343, 170,350, 176,332,
    180,336, 184,345, 187,322, 192,292, 197,286, 200,300, 205,306, 211,290, 216,276, 222,290, 227,282, 233,296, 240,290,
    247,308, 252,290, 258,308, 264,304, 269,292, 272,276, 278,298, 285,294, 290,280, 292,250, 296,238, 298,222, 305,218,
    312,226, 317,238, 322,246, 327,240, 331,226, 335,208, 338,190, 340,184, 347,180, 355,182, 362,172, 370,166, 376,166,
    380,162, 384,142, 387,133, 392,148, 398,148, 402,156, 404,140, 410,135, 413,127, 417,140, 420,146, 424,135, 428,140,
    430,168, 433,188, 435,165, 438,153, 443,156, 448,142, 455,150, 461,164, 464,155, 467,142, 470,155, 474,178, 477,192,
    480,180, 485,190, 490,198, 493,202, 494,230, 496,262, 498,288, 501,298, 506,286, 512,288, 520,284, 526,290, 535,285,
    542,294, 550,290, 553,314, 557,322, 560,312, 567,298, 575,285, 580,275, 587,262, 592,256, 598,266, 603,256, 608,268,
    612,256, 616,270, 620,256, 622,253];

  var seed = 11;
  function rnd() { seed = (seed * 16807) % 2147483647; return seed / 2147483647; }

  var g = document.getElementById('candles');
  var i = 0, prev = path[1];
  for (var x = 54; x < 622; x += 1.5) {
    while (i < path.length - 4 && path[i + 2] <= x) i += 2;
    var t = (x - path[i]) / (path[i + 2] - path[i]);
    var y = path[i + 1] + (path[i + 3] - path[i + 1]) * t + (rnd() - 0.5) * 12;
    var top = Math.min(prev, y) - rnd() * 7, low = Math.max(prev, y) + rnd() * 7;
    if (rnd() > 0.86) { if (rnd() > 0.5) top -= 10; else low += 10; }
    var bold = x > 338 && x < 490;
    var down = y > prev;
    var color = bold || x > 614 ? (down ? '#cc3048' : '#352a2a') : (down ? '#cf7462' : '#8f7260');
    add(g, 'line', { x1: x, x2: x, y1: top.toFixed(1), y2: low.toFixed(1), stroke: color, 'stroke-width': 0.7 });
    add(g, 'line', { x1: x, x2: x, y1: prev.toFixed(1), y2: y.toFixed(1), stroke: color, 'stroke-width': bold ? 1.4 : 1.1 });
    prev = y;
  }

  var targets = document.getElementById('targets');
  [[258.5, 331], [287.5, 312], [433.5, 214], [462.5, 193]].forEach(function (p) {
    add(targets, 'circle', { cx: p[0], cy: p[1], r: 10.5 });
    add(targets, 'circle', { cx: p[0], cy: p[1], r: 4, fill: '#f59b14', stroke: 'none' });
  });

  var axis = document.getElementById('axis');
  for (var n = 0; n <= 12; n++) {
    var py = 119 + n * 24.6;
    add(axis, 'line', { x1: 764, x2: 767, y1: py, y2: py, stroke: '#5a4238' });
    if (n) add(axis, 'text', { x: 771, y: py + 3 }, (1920 - n * 20) + '.000');
  }
  add(axis, 'text', { x: 770, y: 122 }, '1');
  add(axis, 'text', { x: 799, y: 122 }, '0');
  [[63, '22'], [119, 'Apr'], [196, '19'], [265, 'May'], [335, '17'], [410, 'Jun'], [473, '14'], [564, 'Jul'], [646, '19'], [716, 'Aug']].forEach(function (d) {
    add(axis, 'line', { x1: d[0], x2: d[0], y1: 434, y2: 438, stroke: '#5a4238' });
    add(axis, 'text', { x: d[0], y: 447, 'class': 'mid' }, d[1]);
  });
})();
```
